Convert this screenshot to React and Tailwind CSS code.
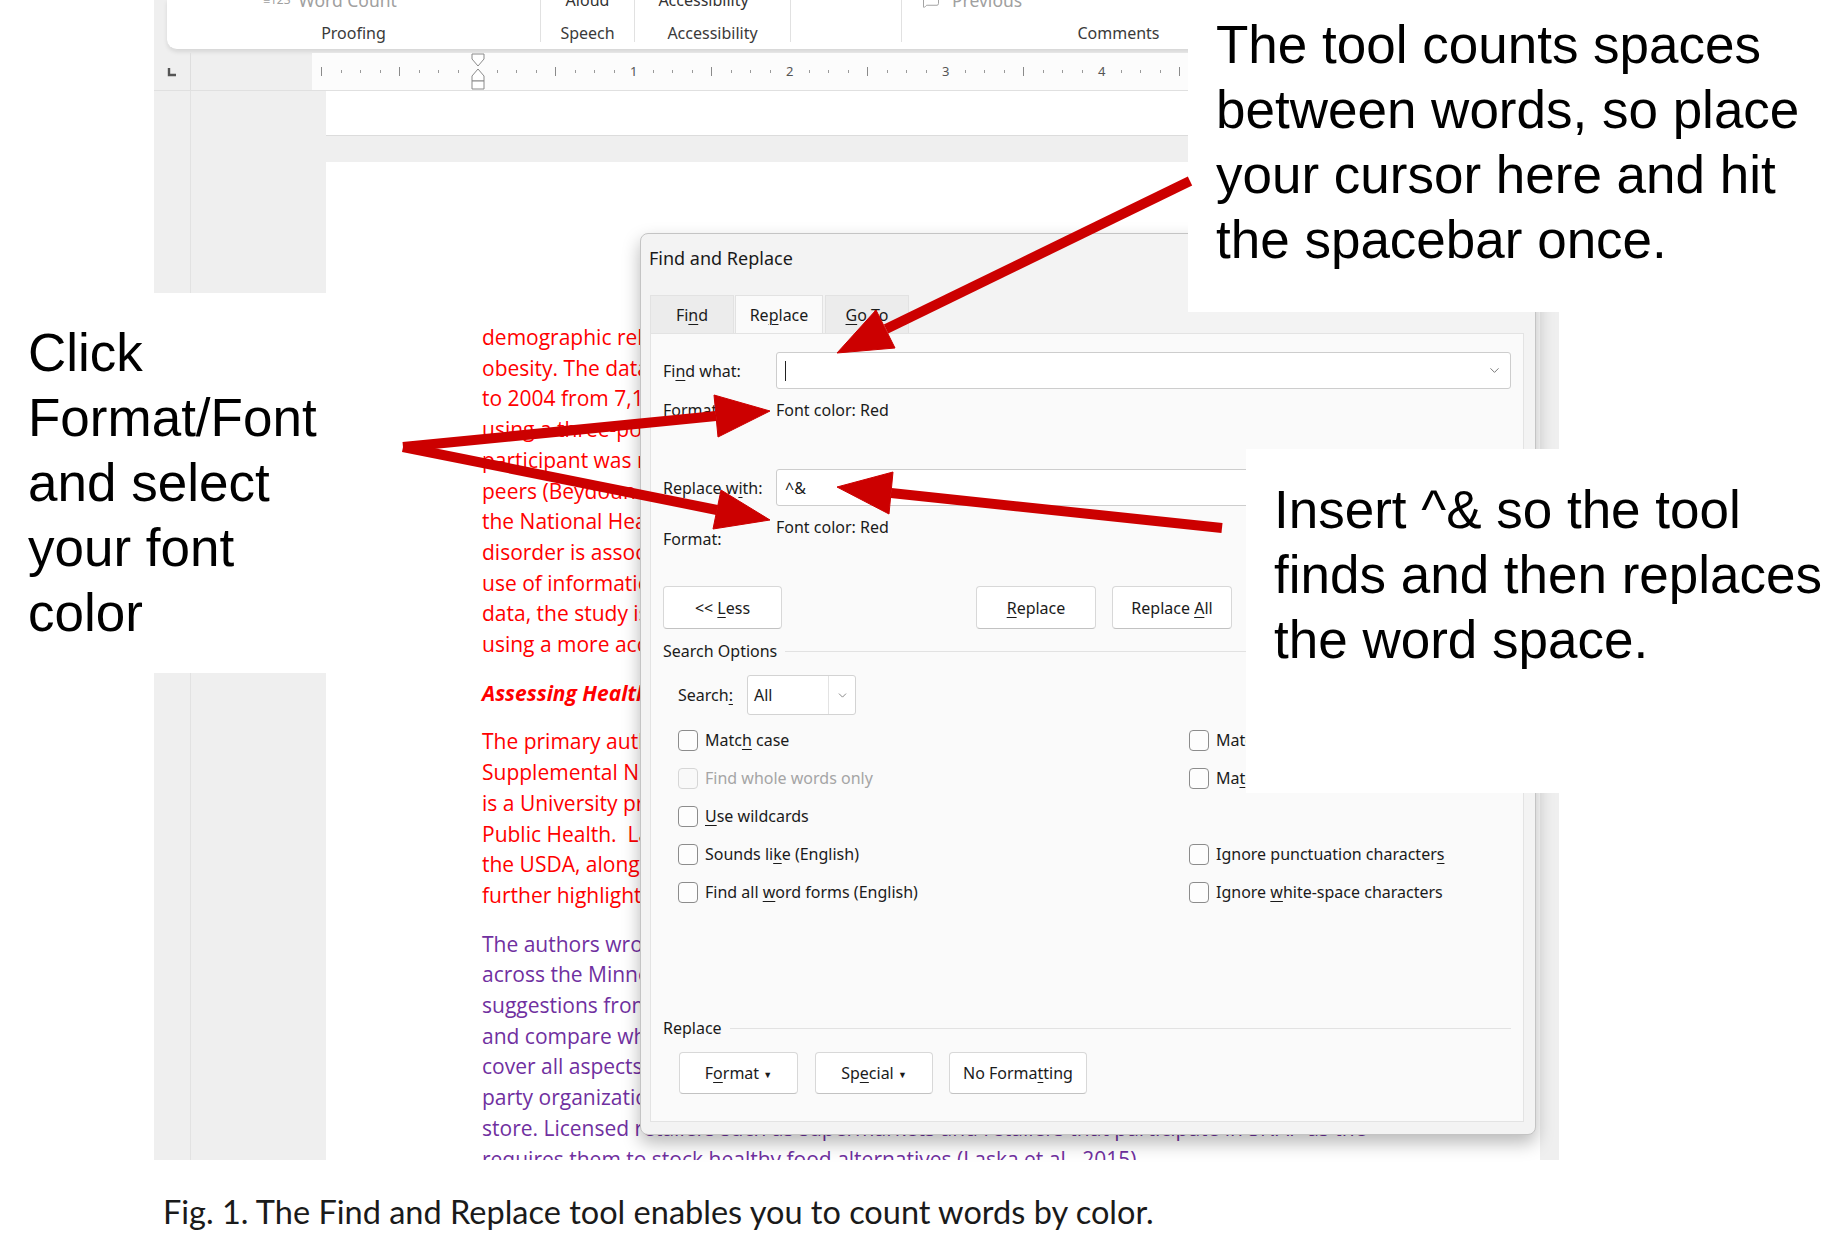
import { ChevronDown, MessageSquare } from 'lucide-react';

const para1 = [
  'demographic related to childhood and adolescent',
  'obesity. The data were collected from 1999',
  'to 2004 from 7,150 children and adolescents',
  'using a three-point scale that rated how each',
  'participant was ranked among his or her',
  'peers (Beydoun & Wang, 2008). According to',
  'the National Health and Nutrition Survey, this',
  "disorder is associated with the household's",
  'use of information about food. Using that',
  'data, the study is able to show the picture',
  'using a more accurate sample of households.',
];

const para3 = [
  'The primary author of the study on the',
  'Supplemental Nutrition Assistance Program',
  'is a University professor at the School of',
  'Public Health.  Laska et al. worked with',
  'the USDA, along with the Minnesota agencies, to',
  'further highlight the food options available.',
];

const para4 = [
  'The authors wrote about the food retailers',
  'across the Minnesota area and used',
  'suggestions from the USDA to evaluate',
  'and compare what these stores offered to',
  'cover all aspects of the healthy food options, with',
  'party organizations helping to review each',
  'store. Licensed retailers such as supermarkets and retailers that participate in SNAP as the',
  'requires them to stock healthy food alternatives (Laska et al., 2015).',
];

function U({ children }) {
  return <span className="underline underline-offset-[3px] decoration-1">{children}</span>;
}

function Btn({ className, children }) {
  return (
    <div className={`${className} h-full shrink-0 flex items-center justify-center bg-white border border-[#d8d8d8] border-b-[#c2c2c2] rounded-[4px]`}>
      <span className="whitespace-nowrap">{children}</span>
    </div>
  );
}

function Check({ children, disabled }) {
  return (
    <div className="h-[38px] flex items-center gap-[7px]">
      <div className={`w-[20px] h-[21px] rounded-[4px] border ${disabled ? 'border-[#d6d6d6] bg-[#f9f9f9]' : 'border-[#8c8c8c] bg-[#fdfdfd]'}`} />
      <span className={disabled ? 'text-[#a5a5a5]' : 'text-[#1b1b1b]'}>{children}</span>
    </div>
  );
}

function Tick({ k }) {
  if (k === 0) {
    return (
      <svg width="14" height="37" viewBox="0 0 14 37">
        <path d="M1 1H13V6L7 13L1 6Z" fill="white" stroke="#8a8a8a" />
        <path d="M7 16L13 23V28H1V23Z" fill="white" stroke="#8a8a8a" />
        <path d="M1 28H13V36H1Z" fill="white" stroke="#8a8a8a" />
      </svg>
    );
  }
  if (k % 8 === 0 && k > 0) return <span className="text-[13px] text-[#555]">{k / 8}</span>;
  if (k % 4 === 0) return <div className="w-px h-[9px] bg-[#8a8a8a]" />;
  return <div className="w-px h-[3px] bg-[#9a9a9a]" />;
}

export default function App() {
  const ticks = Array.from({ length: 53 }, (_, i) => i - 8);

  return (
    <div className="relative w-[1839px] h-[1257px] overflow-hidden bg-white font-['Noto_Sans',sans-serif]">
      {/* Word window */}
      <div className="ml-[154px] w-[1405px] h-[1160px] bg-[#efefef] flex flex-col overflow-hidden">
        {/* ribbon */}
        <div className="h-[50px] shrink-0 ml-[13px] bg-white rounded-bl-[10px] shadow-[0_2px_4px_rgba(0,0,0,0.10)] border-b border-[#d9d9d9] flex items-start overflow-hidden text-[16px]">
          <div className="w-[373px] shrink-0 flex flex-col items-center">
            <div className="-mt-[10px] h-[20px] self-start pl-[96px] flex items-center gap-[8px] text-[#a0a0a0] leading-[20px]">
              <span className="text-[12px]">≡123</span>
              <span className="text-[17.5px]">Word Count</span>
            </div>
            <div className="mt-[13px] leading-[20px] text-[#3a3a3a]">Proofing</div>
          </div>
          <div className="w-px h-[42px] bg-[#e1e1e1]" />
          <div className="w-[93px] shrink-0 flex flex-col items-center">
            <div className="-mt-[10px] h-[20px] leading-[20px] text-[#333]">Aloud</div>
            <div className="mt-[13px] leading-[20px] text-[#3a3a3a]">Speech</div>
          </div>
          <div className="w-px h-[42px] bg-[#e1e1e1]" />
          <div className="w-[155px] shrink-0 flex flex-col items-center">
            <div className="-mt-[10px] h-[20px] leading-[20px] text-[#333] pr-[18px]">Accessibility</div>
            <div className="mt-[13px] leading-[20px] text-[#3a3a3a]">Accessibility</div>
          </div>
          <div className="w-px h-[42px] bg-[#e1e1e1]" />
          <div className="w-[110px] shrink-0" />
          <div className="w-px h-[42px] bg-[#e1e1e1]" />
          <div className="w-[433px] shrink-0 flex flex-col items-center">
            <div className="-mt-[10px] h-[20px] self-start pl-[20px] flex items-center gap-[12px] text-[#a0a0a0] leading-[20px]">
              <MessageSquare size={18} strokeWidth={1.3} />
              <span className="text-[17.5px]">Previous</span>
            </div>
            <div className="mt-[13px] leading-[20px] text-[#3a3a3a]">Comments</div>
          </div>
        </div>

        {/* ruler */}
        <div className="h-[37px] mt-[3px] flex items-stretch shrink-0">
          <div className="w-[37px] border-r border-[#dedede] flex items-center justify-center">
            <svg width="10" height="10" viewBox="0 0 10 10">
              <path d="M2 1V8H9" fill="none" stroke="#555" strokeWidth="2.4" />
            </svg>
          </div>
          <div className="ml-[121px] flex-1 flex bg-[#fcfcfc]">
            {ticks.map((k) => (
              <div key={k} className="w-[19.5px] shrink-0 h-full flex items-center justify-center">
                <Tick k={k} />
              </div>
            ))}
          </div>
        </div>

        {/* document */}
        <div className="flex-1 min-h-0 overflow-hidden flex border-t border-[#e0e0e0]">
          <div className="w-[172px] shrink-0">
            <div className="w-[37px] h-full border-r border-[#e2e2e2]" />
          </div>
          <div className="w-[1214px] shrink-0 flex flex-col">
            <div className="h-[45px] shrink-0 bg-white border-b border-[#dcdcdc]" />
            <div className="h-[26px] shrink-0" />
            <div className="flex-1 bg-white pt-[160px] pl-[156px] font-['Open_Sans',sans-serif] text-[21px] leading-[30.7px] whitespace-nowrap">
              <div className="text-[#ff0000]">
                {para1.map((l) => <div key={l}>{l}</div>)}
              </div>
              <div className="mt-[18px] text-[#ff0000] font-bold italic">Assessing Health Options in SNAP Retailers</div>
              <div className="mt-[18px] text-[#ff0000]">
                {para3.map((l) => <div key={l} className="whitespace-pre">{l}</div>)}
              </div>
              <div className="mt-[18px] text-[#7030a0]">
                {para4.map((l) => <div key={l}>{l}</div>)}
              </div>
            </div>
          </div>
        </div>
      </div>

      {/* caption */}
      <p className="mt-[32px] ml-[163px] font-['Lato',sans-serif] text-[32.5px] leading-[40px] text-[#1a1a1a] whitespace-nowrap">
        Fig. 1. The Find and Replace tool enables you to count words by color.
      </p>

      {/* Find and Replace dialog */}
      <div className="absolute left-[640px] top-[233px] w-[896px] h-[902px] bg-[#f3f3f3] border border-[#c4c4c4] rounded-[8px] shadow-[0_8px_18px_rgba(0,0,0,0.28)] flex flex-col text-[16px] text-[#1b1b1b]">
        <div className="h-[49px] pl-[8px] flex items-center text-[18px] text-[#1a1a1a]">Find and Replace</div>
        <div className="h-[12px]" />
        <div className="h-[38px] pl-[9px] flex items-stretch">
          <div className="w-[84px] flex items-center justify-center bg-[#ececec] border border-b-0 border-[#e2e2e2]"><span>Fi<U>n</U>d</span></div>
          <div className="w-[88px] ml-px flex items-center justify-center bg-[#fafafa] border border-b-0 border-[#e2e2e2]"><span>Re<U>p</U>lace</span></div>
          <div className="w-[84px] ml-[2px] flex items-center justify-center bg-[#ececec] border border-b-0 border-[#e2e2e2]"><span><U>G</U>o To</span></div>
        </div>
        <div className="ml-[9px] w-[874px] h-[789px] bg-[#fafafa] border border-[#e3e3e3] px-[12px] flex flex-col">
          <div className="mt-[18px] h-[37px] flex items-center">
            <div className="w-[113px] shrink-0">Fi<U>n</U>d what:</div>
            <div className="flex-1 h-full bg-white border border-[#cdcdcd] rounded-[3px] flex items-center pl-[8px] pr-[8px]">
              <div className="w-px h-[20px] bg-[#222]" />
              <div className="flex-1" />
              <ChevronDown size={15} strokeWidth={1.4} className="text-[#666]" />
            </div>
          </div>
          <div className="mt-[5px] h-[32px] flex items-center">
            <div className="w-[113px] shrink-0">Format:</div>
            <div>Font color: Red</div>
          </div>
          <div className="mt-[43px] h-[37px] flex items-center">
            <div className="w-[113px] shrink-0">Replace w<U>i</U>th:</div>
            <div className="flex-1 h-full bg-white border border-[#cdcdcd] rounded-[3px] flex items-center pl-[8px] pr-[8px]">
              <span>^&amp;</span>
              <div className="flex-1" />
              <ChevronDown size={15} strokeWidth={1.4} className="text-[#666]" />
            </div>
          </div>
          <div className="mt-[10px] flex">
            <div className="w-[113px] shrink-0 pt-[12px] leading-[22px]">Format:</div>
            <div className="leading-[22px]">Font color: Red</div>
          </div>
          <div className="mt-[36px] h-[43px] flex">
            <Btn className="w-[119px]">&lt;&lt; <U>L</U>ess</Btn>
            <Btn className="w-[120px] ml-[194px]"><U>R</U>eplace</Btn>
            <Btn className="w-[120px] ml-[16px]">Replace <U>A</U>ll</Btn>
            <Btn className="w-[120px] ml-[16px]"><U>F</U>ind Next</Btn>
            <Btn className="w-[120px] ml-[16px]">Cancel</Btn>
          </div>
          <div className="mt-[11px] h-[22px] flex items-center">
            <span>Search Options</span>
            <div className="flex-1 ml-[8px] h-px bg-[#e2e2e2]" />
          </div>
          <div className="mt-[13px] h-[40px] pl-[15px] flex items-center">
            <div className="w-[69px] shrink-0">Search<U>:</U></div>
            <div className="w-[109px] h-full bg-white border border-[#d3d3d3] rounded-[3px] flex items-stretch">
              <div className="flex-1 pl-[6px] flex items-center">All</div>
              <div className="w-[27px] border-l border-[#e3e3e3] flex items-center justify-center">
                <ChevronDown size={13} strokeWidth={1.4} className="text-[#666]" />
              </div>
            </div>
          </div>
          <div className="mt-[6px] pl-[15px] grid grid-cols-[511px_1fr]">
            <Check>Matc<U>h</U> case</Check>
            <Check>Match pre<U>f</U>ix</Check>
            <Check disabled>Find whole words only</Check>
            <Check>Ma<U>t</U>ch suffix</Check>
            <Check><U>U</U>se wildcards</Check>
            <div />
            <Check>Sounds li<U>k</U>e (English)</Check>
            <Check>Ignore punctuation character<U>s</U></Check>
            <Check>Find all <U>w</U>ord forms (English)</Check>
            <Check>Ignore <U>w</U>hite-space characters</Check>
          </div>
          <div className="mt-[106px] h-[22px] flex items-center">
            <span>Replace</span>
            <div className="flex-1 ml-[8px] h-px bg-[#e2e2e2]" />
          </div>
          <div className="mt-[13px] h-[42px] pl-[16px] flex">
            <Btn className="w-[119px]">F<U>o</U>rmat <span className="text-[9px] align-middle">▼</span></Btn>
            <Btn className="w-[118px] ml-[17px]">Sp<U>e</U>cial <span className="text-[9px] align-middle">▼</span></Btn>
            <Btn className="w-[138px] ml-[16px]">No Forma<U>t</U>ting</Btn>
          </div>
        </div>
      </div>

      {/* annotations */}
      <div className="absolute left-[1188px] top-0 w-[651px] h-[312px] bg-white pl-[28px] pt-[12px] font-['Liberation_Sans',Arial,sans-serif] text-[53px] leading-[65px] text-black whitespace-nowrap">
        <p>The tool counts spaces</p>
        <p>between words, so place</p>
        <p>your cursor here and hit</p>
        <p>the spacebar once.</p>
      </div>
      <div className="absolute left-0 top-[293px] w-[327px] h-[380px] bg-white pl-[28px] pt-[27px] font-['Liberation_Sans',Arial,sans-serif] text-[53px] leading-[65px] text-black whitespace-nowrap">
        <p>Click</p>
        <p>Format/Font</p>
        <p>and select</p>
        <p>your font</p>
        <p>color</p>
      </div>
      <div className="absolute left-[1246px] top-[449px] w-[593px] h-[344px] bg-white pl-[28px] pt-[28px] font-['Liberation_Sans',Arial,sans-serif] text-[53px] leading-[65px] text-black whitespace-nowrap">
        <p>Insert ^&amp; so the tool</p>
        <p>finds and then replaces</p>
        <p>the word space.</p>
      </div>

      {/* arrows */}
      <svg className="absolute inset-0 pointer-events-none" width="1839" height="1257" viewBox="0 0 1839 1257">
        <g fill="#cc0000" stroke="#cc0000">
          <line x1="1190" y1="181" x2="886" y2="329" strokeWidth="10" />
          <polygon points="837,353 895,348 876,310" strokeWidth="1" />
          <line x1="403" y1="447" x2="716" y2="416" strokeWidth="10" />
          <polygon points="770,411 714,395 718,437" strokeWidth="1" />
          <line x1="403" y1="447" x2="717" y2="510" strokeWidth="10" />
          <polygon points="770,520 721,490 713,529" strokeWidth="1" />
          <line x1="1222" y1="528" x2="891" y2="493" strokeWidth="10" />
          <polygon points="837,487 893,472 889,514" strokeWidth="1" />
        </g>
      </svg>
    </div>
  );
}
